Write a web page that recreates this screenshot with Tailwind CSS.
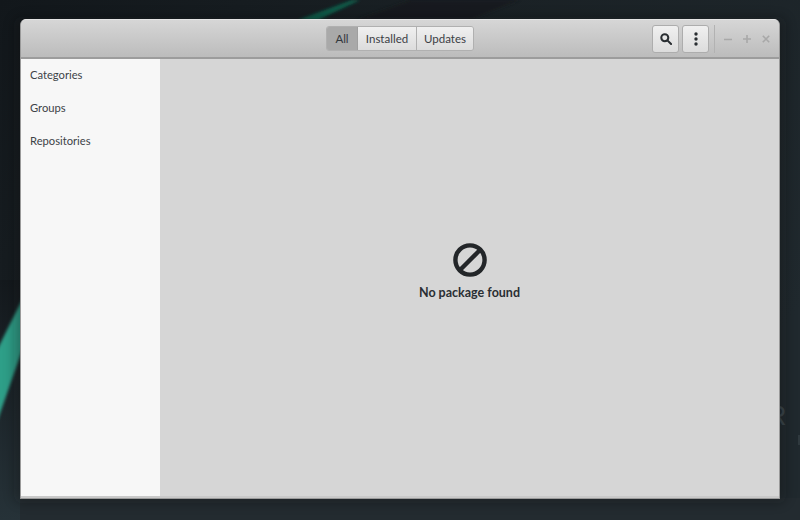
<!DOCTYPE html>
<html>
<head>
<meta charset="utf-8">
<script src="https://cdn.jsdelivr.net/npm/@tailwindcss/browser@4"></script>
</head>
<body class="m-0">
<div class="relative w-[800px] h-[520px] overflow-hidden bg-[#1b2227] font-['Lato',sans-serif]">
  <svg class="absolute inset-0" width="800" height="520" viewBox="0 0 800 520" aria-hidden="true">
    <defs>
      <linearGradient id="bg" x1="0" y1="0" x2="1" y2="0.6">
        <stop offset="0" stop-color="#12171b"/>
        <stop offset="0.45" stop-color="#1a2125"/>
        <stop offset="1" stop-color="#20292e"/>
      </linearGradient>
      <linearGradient id="bl" x1="0" y1="0" x2="0" y2="1">
        <stop offset="0" stop-color="#14191d"/>
        <stop offset="1" stop-color="#263238"/>
      </linearGradient>
      <filter id="b1"><feGaussianBlur stdDeviation="1.5"/></filter>
      <filter id="b2"><feGaussianBlur stdDeviation="6"/></filter>
    </defs>
    <rect width="800" height="520" fill="url(#bg)"/>
    <rect x="0" y="280" width="30" height="240" fill="url(#bl)"/>
    <rect x="20" y="498" width="780" height="22" fill="#232b30"/>
    <path d="M298 20 L352 0 L360 0 L318 20 Z" fill="#0f5b49" filter="url(#b1)"/>
    <path d="M356 20 L410 0 L520 0 L470 20 Z" fill="#14191c" opacity="0.6" filter="url(#b1)"/>
    <path d="M-4 352 L24 296 L24 345 L-4 425 Z" fill="#2f9f88" filter="url(#b1)"/>
    <text x="767" y="425" font-size="27" fill="#3a454b" font-family="Liberation Sans">R</text>
    <text x="767" y="445" font-size="14" fill="#2f393e" font-family="Liberation Sans">D</text>
    <rect x="798" y="435" width="2" height="10" fill="#2f393e"/>
    <rect x="14" y="17" width="772" height="486" rx="8" fill="#0a0d0f" opacity="0.3" filter="url(#b2)"/>
  </svg>

  <div class="absolute left-[20px] top-[19px] w-[760px] h-[480px] flex flex-col rounded-t-[6px] overflow-hidden border border-t-0 border-[#9a9a9a] bg-[#c9c9c9]">
    <header class="relative h-[40px] shrink-0 flex items-center justify-end bg-gradient-to-b from-[#d6d6d6] to-[#bcbcbc] border-b-2 border-[#9c9c9c] pr-[9px] border-t border-t-[#e4e4e4]">
      <div class="absolute left-[305px] top-[6px] flex h-[25px] rounded-[3px] border border-[#b0b0b0] text-[11.5px] text-[#3b4045] overflow-hidden">
        <div class="w-[31px] flex items-center justify-center bg-[#a9a9a9] text-[#33383d] border-r border-[#9f9f9f]">All</div>
        <div class="w-[59px] flex items-center justify-center bg-gradient-to-b from-[#f0f0f0] to-[#dcdcdc] border-r border-[#b0b0b0]">Installed</div>
        <div class="w-[56px] flex items-center justify-center bg-gradient-to-b from-[#f0f0f0] to-[#dcdcdc]">Updates</div>
      </div>
      <div class="flex items-center gap-[3px]">
        <button class="w-[27px] h-[28px] flex items-center justify-center rounded-[3px] border border-[#adadad] bg-gradient-to-b from-[#f0f0f0] to-[#dcdcdc]">
          <svg width="12" height="12" viewBox="0 0 13 13" fill="none" stroke="#2a2e32" stroke-width="2.2"><circle cx="5.2" cy="5.2" r="3.8"/><path d="M8 8l4 4" stroke-linecap="round"/></svg>
        </button>
        <button class="w-[27px] h-[28px] flex items-center justify-center rounded-[3px] border border-[#adadad] bg-gradient-to-b from-[#f0f0f0] to-[#dcdcdc]">
          <svg width="4" height="14" viewBox="0 0 4 14" fill="#2a2e32"><circle cx="2" cy="2" r="1.7"/><circle cx="2" cy="7" r="1.7"/><circle cx="2" cy="12" r="1.7"/></svg>
        </button>
        <div class="w-px h-[28px] bg-[#b2b2b2] ml-[2px] mr-[6px]"></div>
        <div class="flex items-center gap-[11px]">
          <svg width="8" height="8" viewBox="0 0 8 8"><path d="M0 4.5h8" stroke="#a8a8a8" stroke-width="1.6"/></svg>
          <svg width="8" height="8" viewBox="0 0 8 8"><path d="M0 4h8M4 0v8" stroke="#a8a8a8" stroke-width="1.6"/></svg>
          <svg width="8" height="8" viewBox="0 0 8 8"><path d="M.8.8l6.4 6.4M7.2.8L.8 7.2" stroke="#a8a8a8" stroke-width="1.6"/></svg>
        </div>
      </div>
    </header>
    <div class="flex-1 flex min-h-0 mb-[2px]">
      <aside class="w-[139px] shrink-0 bg-[#f7f7f7] flex flex-col pl-[9px] text-[11.2px] text-[#3d4348]">
        <div class="h-[33px] flex items-center">Categories</div>
        <div class="h-[33px] flex items-center">Groups</div>
        <div class="h-[33px] flex items-center">Repositories</div>
      </aside>
      <main class="flex-1 flex flex-col items-center bg-[#d6d6d6] pt-[184px]">
        <svg width="34" height="34" viewBox="0 0 34 34" fill="none" stroke="#232629" stroke-width="4.4"><circle cx="17" cy="17" r="14.6"/><path d="M7.5 26.5L26.5 7.5"/></svg>
        <div class="text-[12.5px] font-bold text-[#2a2e33] mt-[8px] leading-[16px]">No package found</div>
      </main>
    </div>
  </div>
</div>
</body>
</html>
